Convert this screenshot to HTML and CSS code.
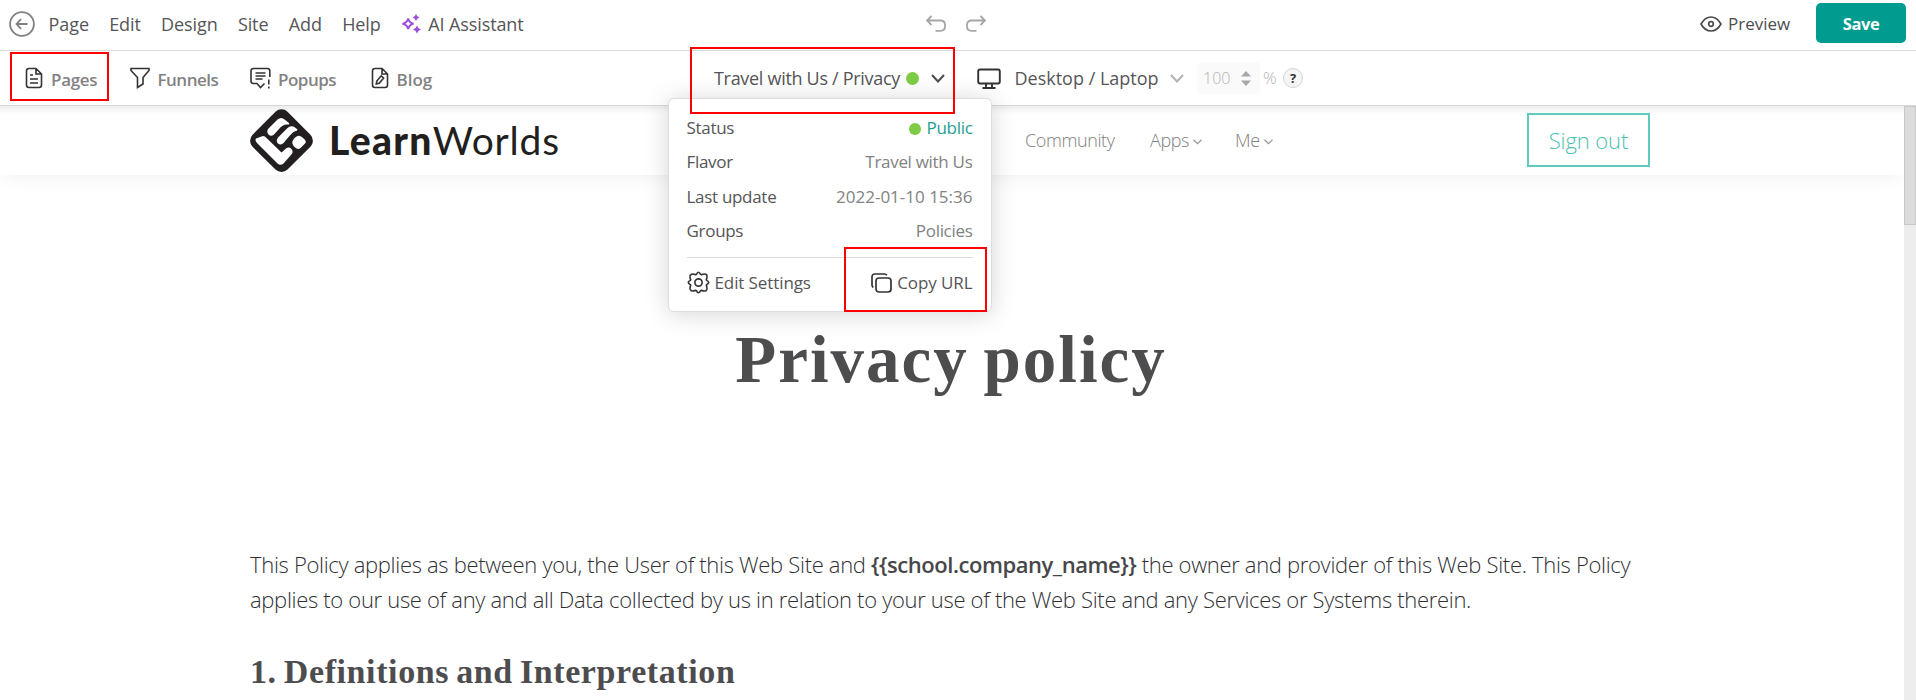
FILE: index.html
```html
<!DOCTYPE html>
<html lang="en">
<head>
<meta charset="utf-8">
<title>Privacy policy</title>
<link rel="stylesheet" href="styles.css">
</head>
<body>
<header class="topbar">
  <div class="top-left">
    <svg class="back" width="26" height="26" viewBox="0 0 26 26"><circle cx="13" cy="13" r="11.9"/><path d="M18.5 13H8M12 8.2L7.5 13l4.500 4.800"/></svg>
    <nav class="menu">
      <span>Page</span><span>Edit</span><span>Design</span><span>Site</span><span>Add</span><span>Help</span>
    </nav>
    <svg class="spark" width="20" height="20" viewBox="0 0 20 20"><path class="outline" d="M7.200 4.500Q8.200 8.800 12.500 9.800Q8.200 10.800 7.200 15Q6.200 10.800 1.500 9.800Q6.200 8.800 7.200 4.500Z"/><path d="M15 0Q15.800 2.700 18.500 3.500Q15.800 4.300 15 7Q14.200 4.300 11.500 3.500Q14.200 2.700 15 0ZM16 11.500Q16.900 14.600 20 15.500Q16.900 16.400 16 19.500Q15.100 16.400 12 15.500Q15.100 14.600 16 11.500Z"/></svg>
    <span class="assistant">AI Assistant</span>
  </div>
  <div class="history">
    <svg width="20" height="17" viewBox="0 0 20 17"><path d="M5.500 1L1 5.500L5.500 10M1 5.500H14.500Q19 5.500 19 10V11.500Q19 15.800 14.500 15.800H9.500"/></svg>
    <svg width="20" height="17" viewBox="0 0 20 17"><path d="M14.500 1L19 5.500L14.500 10M19 5.500H5.500Q1 5.500 1 10V11.500Q1 15.800 5.500 15.800H10.500"/></svg>
  </div>
  <div class="top-right">
    <svg width="22" height="16" viewBox="0 0 22 16"><path d="M1 8Q5 1 11 1T21 8Q17 15 11 15T1 8Z"/><circle cx="11" cy="8" r="2.300"/></svg>
    <span class="preview">Preview</span>
    <button class="save">Save</button>
  </div>
</header>

<div class="toolbar">
  <nav class="tabs">
    <span class="tab"><svg width="18" height="22" viewBox="0 0 18 22"><path d="M4 1.500H11L16.500 7V18Q16.500 20.500 14 20.500H4Q1.500 20.500 1.500 18V4Q1.500 1.500 4 1.500ZM11 1.500V7H16.500M5 8H8M5 12H13M5 16H13"/></svg>Pages</span>
    <span class="tab"><svg width="20" height="22" viewBox="0 0 20 22"><path d="M1 1.500H19V3.500L13 10.500V17L7.500 20.500V10.500L1 3.500Z"/></svg>Funnels</span>
    <span class="tab"><svg width="22" height="22" viewBox="0 0 22 22"><path d="M19.800 10V4Q19.800 1.500 17.500 1.500H3.500Q1 1.500 1 4V14Q1 16.500 3.500 16.500H7L10.500 20.500L14.500 16.500M5.500 6H15.500M5.500 9H15.500M5.500 12H12.500M18.800 12.500V17.500M18.800 19.500V21.500"/></svg>Popups</span>
    <span class="tab"><svg width="18" height="22" viewBox="0 0 18 22"><path d="M4 1.500H11L16.500 7V18Q16.500 20.500 14 20.500H4Q1.500 20.500 1.500 18V4Q1.500 1.500 4 1.500ZM11 1.500V7H16.500M5.300 17L5.800 14L10.200 8.800L12.600 11L8.200 16.200Z"/></svg>Blog</span>
  </nav>
  <div class="picker">
    <span>Travel with Us / Privacy</span><i class="dot"></i>
    <svg class="chev dark" width="14" height="9" viewBox="0 0 14 9"><path d="M1 1L7 7.500L13 1"/></svg>
  </div>
  <div class="device">
    <svg class="monitor" width="24" height="21" viewBox="0 0 24 21"><path d="M3 1.500H21Q22.800 1.500 22.800 3.500V13.500Q22.800 15.500 21 15.500H3Q1.200 15.500 1.200 13.500V3.500Q1.200 1.500 3 1.500ZM9 15.500V20M15 15.500V20M5.500 20H18.500"/></svg>
    <span>Desktop / Laptop</span>
    <svg class="chev" width="14" height="9" viewBox="0 0 14 9"><path d="M1 1L7 7.500L13 1"/></svg>
  </div>
  <div class="zoom">
    <div class="zoom-box"><span>100</span><svg width="10" height="15" viewBox="0 0 10 15"><path d="M0 5.500L5 0L10 5.500ZM0 9.500L5 15L10 9.500Z"/></svg></div>
    <span class="pct">%</span>
    <span class="help">?</span>
  </div>
</div>

<div class="stage">
  <main class="page">
    <div class="site-header">
      <div class="brand">
        <svg width="63" height="64" viewBox="0 0 63 64"><rect x="6.800" y="7" width="49.400" height="49.400" rx="8.500" transform="rotate(45 31.500 31.700)"/><g class="cut"><path d="M18.500 19.500L27.500 10.500Q31.500 7.500 34.500 10.500L39 14Q40 15.500 37.500 15.500Q33 15 29 20L24 25.500Q21 28 18.500 25.500Q16 22.500 18.500 19.500Z"/><path d="M28 28.500L37 19.500Q41 15.500 45 18.500L47.500 20.500Q47.500 22 44.500 22.500Q42 23.500 34 33.500Q31 37 28 34.500Q25.500 32 28 28.500Z"/><path d="M44.500 29L47 27.300Q49.500 26 52.500 28.500Q58 33 54.500 35L50 39.500Q47 41 44 37.500L43 36Q41 33 44.500 29Z"/><path d="M6 29.500L11.500 27.500Q14 26 17 29.500L31.500 43.500L36 39.500Q39 37.500 41.500 40Q44 43 41 46L33.500 54.500Q30.500 57 27.500 54.500L7.500 34.500Q4.500 31.500 6 29.500Z"/></g></svg>
        <div class="wordmark"><b>Learn</b><span>Worlds</span></div>
      </div>
      <nav class="links">
        <span>Community</span>
        <span>Apps<svg width="9" height="6" viewBox="0 0 9 6"><path d="M.5.700L4.500 4.700L8.500.700"/></svg></span>
        <span>Me<svg width="9" height="6" viewBox="0 0 9 6"><path d="M.5.700L4.500 4.700L8.500.700"/></svg></span>
      </nav>
      <button class="signout">Sign out</button>
    </div>
    <h1>Privacy policy</h1>
    <p>This Policy applies as between you, the User of this Web Site and <b>{{school.company_name}}</b> the owner and provider of this Web Site. This Policy<br>applies to our use of any and all Data collected by us in relation to your use of the Web Site and any Services or Systems therein.</p>
    <h2>1. Definitions and Interpretation</h2>
  </main>
  <div class="scroll"><div class="thumb"></div></div>
</div>

<section class="dropdown">
  <div class="row"><span>Status</span><span class="public"><i class="dot"></i>Public</span></div>
  <div class="row"><span>Flavor</span><em>Travel with Us</em></div>
  <div class="row"><span>Last update</span><em class="date">2022-01-10 15:36</em></div>
  <div class="row"><span>Groups</span><em>Policies</em></div>
  <div class="actions">
    <span><svg width="23" height="23" viewBox="0 0 24 24"><circle cx="12" cy="12" r="3.800"/><path d="M9.800 3.500Q12 -.8 14.200 3.500L15 3.800Q19.500 2.300 20.200 4Q21.700 4.700 20.200 9L20.500 9.800Q24.800 12 20.500 14.200L20.200 15Q21.700 19.500 20 20.200Q19.300 21.700 15 20.200L14.200 20.500Q12 24.800 9.800 20.500L9 20.200Q4.700 21.700 4 20Q2.300 19.300 3.800 15L3.500 14.200Q-.8 12 3.500 9.800L3.800 9Q2.300 4.700 4 4Q4.700 2.300 9 3.800Z"/></svg>Edit Settings</span>
    <span><svg width="21" height="20" viewBox="0 0 21 20"><rect x="5" y="5" width="15" height="14" rx="3"/><path d="M2.300 14.500Q1 13.500 1 12V4Q1 1 4 1H13.500Q15 1 16 2.300"/></svg>Copy URL</span>
  </div>
</section>

<div class="mark mark-pages"></div>
<div class="mark mark-picker"></div>
<div class="mark mark-copy"></div>
</body>
</html>
```
FILE: styles.css
```css
* { box-sizing: border-box; }
body { margin: 0; width: 1916px; height: 700px; overflow: hidden; position: relative; background: #fff; color: #555557; font: 18px/24px "Open Sans", sans-serif; white-space: nowrap; }
svg { display: block; flex: none; fill: none; stroke: #333; stroke-width: 1.7; }
em { font-style: normal; color: #828282; }

/* Top menu bar */
.topbar { display: flex; height: 51px; padding-bottom: 3px; border-bottom: 1px solid #d9d9d9; }
.top-left { display: flex; align-items: center; width: 926px; padding-left: 9px; letter-spacing: -.1px; }
.back { stroke: #808080; stroke-width: 1.8; }
.menu { display: flex; gap: 20.300px; margin-left: 13.600px; }
.spark { margin: 0 7.500px 0 20px; fill: #9c51e0; stroke: none; }
.spark .outline { fill: none; stroke: #9c51e0; stroke-width: 2; }
.history { display: flex; align-items: center; gap: 20px; width: 774px; }
.history svg { stroke: #a6a6a6; stroke-width: 1.8; }
.top-right { display: flex; align-items: center; }
.top-right svg { stroke: #4d4d4f; }
.preview { width: 88px; margin: 0 0 0 6px; color: #4d4d4f; font-size: 17px; font-weight: 500; }
.save { width: 90px; height: 40px; margin-top: -1px; border: 0; border-radius: 5px; background: #009c8f; color: #fff; font: 700 16.500px "Open Sans", sans-serif; letter-spacing: -.4px; }

/* Tool bar */
.toolbar { display: flex; align-items: center; height: 55px; border-bottom: 1px solid #d9d9d9; }
.tabs { display: flex; width: 714px; padding: 3px 0 0 25px; font-size: 17px; font-weight: 600; color: #828282; }
.tab { display: flex; align-items: center; letter-spacing: -.5px; }
.tab svg { stroke-width: 1.6; margin-top: -3px; margin-right: 8px; }
.tab:nth-child(1) { width: 104.500px; letter-spacing: -.3px; }
.tab:nth-child(2) { width: 120px; }
.tab:nth-child(3) { width: 121px; }
.tab:nth-child(3) svg { margin-right: 6.500px; }
.tab:nth-child(4) { letter-spacing: 0; }
.picker { display: flex; align-items: center; width: 263px; letter-spacing: -.3px; }
.dot { display: inline-block; width: 13px; height: 13px; border-radius: 50%; background: #7ecb45; }
.picker .dot { margin: 1px 12px 0 6px; }
.chev { stroke: #b3b3b3; stroke-width: 2; }
.chev.dark { stroke: #4d4d4f; }
.device { display: flex; align-items: center; width: 220px; }
.device .chev { margin-left: 11.500px; }
.monitor { margin-right: 13.500px; stroke-width: 1.900; }
.zoom { display: flex; align-items: center; color: #b5b5b5; font-weight: 300; }
.zoom-box { display: flex; align-items: center; justify-content: space-between; width: 63px; height: 32px; padding: 0 9px 0 6px; border-radius: 5px; background: #fafafa; font-size: 16px; }
.zoom-box svg { fill: #a8a8a8; stroke: none; }
.pct { width: 23px; padding-left: 3px; font-size: 17px; }
.help { width: 20px; height: 20px; border: 1px solid #d4d4d4; border-radius: 50%; background: #f5f5f5; color: #333; font: 700 13px/18px "Open Sans", sans-serif; text-align: center; }

/* Edited page */
.stage { display: flex; height: 594px; box-shadow: inset 0 9px 9px -8px #0002; }
.page { width: 1904px; padding-left: 250px; }
.site-header { display: flex; height: 69px; margin-left: -250px; padding-left: 250px; box-shadow: 0 8px 16px -4px #0000000d; }
.brand { display: flex; width: 775px; padding-top: 3px; }
.brand svg { fill: #231f20; stroke: none; }
.brand .cut { fill: #fff; }
.wordmark { margin-left: 16px; padding-top: 1px; color: #231f20; font: 39px/60px Lato, sans-serif; }
.wordmark b { font-weight: 900; letter-spacing: 1.300px; }
.wordmark span { letter-spacing: .8px; }
.links { display: flex; align-items: center; width: 502px; padding-bottom: 1px; color: #808080; font-weight: 300; letter-spacing: -.4px; }
.links span { display: flex; align-items: center; }
.links span:nth-child(1) { width: 125px; }
.links span:nth-child(2) { width: 85px; }
.links svg { margin: 3px 0 0 4px; stroke: #999; stroke-width: 1.300; }
.signout { width: 123px; height: 54px; margin-top: 7px; border: 2px solid #5fcabd; background: #fff; color: #4cc0b2; font: 300 22px "Open Sans", sans-serif; letter-spacing: -.1px; }
h1 { width: 1402px; margin: 146px 0 0; color: #4d4d4f; font: 700 67px/76px "Liberation Serif", serif; letter-spacing: 2px; word-spacing: -4px; text-align: center; }
p { margin: 150px 0 0; color: #303033; font: 300 22px/35px "Open Sans", sans-serif; letter-spacing: -.315px; }
p b { color: #47474a; font-weight: 600; letter-spacing: -.46px; }
h2 { margin: 35px 0 0; color: #4d4d4f; font: 700 34px/40px "Liberation Serif", serif; letter-spacing: .6px; word-spacing: -2px; }
.scroll { width: 12px; background: #ededed; }
.thumb { height: 119px; border: 1px solid #c8c8c8; background: #dcdcdc; }

/* Page details menu */
.dropdown { position: absolute; left: 668px; top: 98px; width: 324px; height: 214px; padding: 12px 18.500px 0 17.500px; border: 1px solid #ddd; border-radius: 6px; background: #fff; box-shadow: 0 2px 24px #0000002b; font-size: 17px; letter-spacing: -.3px; }
.row { display: flex; justify-content: space-between; height: 34.400px; line-height: 34.400px; }
.date { letter-spacing: 0; }
.public { color: #239e91; }
.public .dot { margin-right: 6px; vertical-align: -1px; width: 12px; height: 12px; }
.actions { display: flex; justify-content: space-between; align-items: center; height: 51px; margin-top: 8px; border-top: 1px solid #d9d9d9; letter-spacing: -.1px; }
.actions span { display: flex; align-items: center; gap: 5px; }

/* Callout frames */
.mark { position: absolute; border: 2px solid #f00; }
.mark-pages { left: 10px; top: 52px; width: 99px; height: 49px; }
.mark-picker { left: 690px; top: 47px; width: 265px; height: 67px; }
.mark-copy { left: 844px; top: 247px; width: 143px; height: 65px; }
```
